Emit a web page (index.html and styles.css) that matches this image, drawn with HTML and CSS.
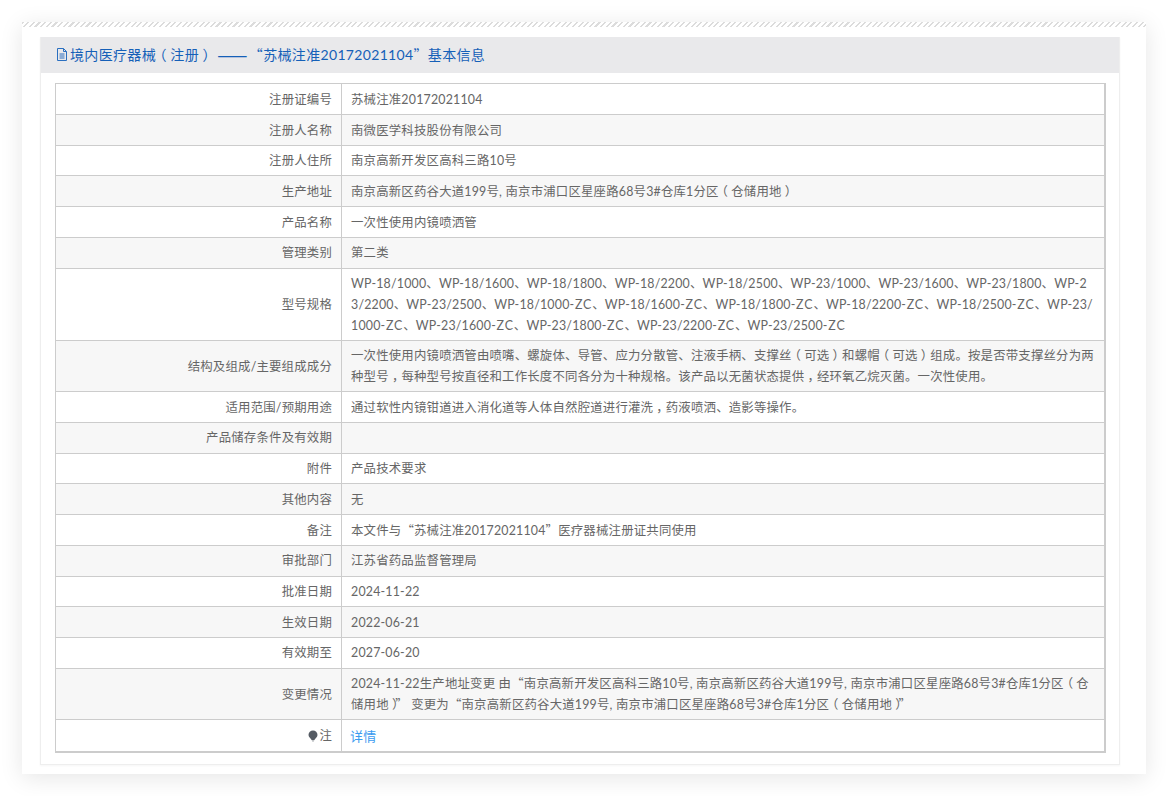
FILE: index.html
```html
<!DOCTYPE html>
<html lang="zh-CN">
<head>
    <meta charset="UTF-8">
    <title>境内医疗器械（注册）基本信息</title>
    <link rel="stylesheet" href="styles.css">
</head>
<body>
    <div class="sheet">
        <div class="stripes"></div>
        <div class="panel">
            <div class="panel-head">
                <svg class="doc-icon" viewBox="0 0 12 14" width="12" height="14">
                    <path d="M1.500 1.500h6l3 3v9h-9z M7.500 1.500v3h3 M3.500 7h5 M3.500 9h5 M3.500 11h5" fill="none" stroke="#2a6fc0" stroke-width="1"/>
                </svg>
                <span>境内医疗器械<span class="lp">（</span>注册<span class="rp">）</span></span><span class="dash">——</span><span><q>“</q>苏械注准20172021104<q>”</q>基本信息</span>
            </div>
            <div class="panel-body">
                <table class="info">
                    <tr><th>注册证编号</th><td>苏械注准20172021104</td></tr>
                    <tr><th>注册人名称</th><td>南微医学科技股份有限公司</td></tr>
                    <tr><th>注册人住所</th><td>南京高新开发区高科三路10号</td></tr>
                    <tr><th>生产地址</th><td>南京高新区药谷大道199号, 南京市浦口区星座路68号3#仓库1分区<span class="lp">（</span>仓储用地<span class="rp">）</span></td></tr>
                    <tr><th>产品名称</th><td>一次性使用内镜喷洒管</td></tr>
                    <tr><th>管理类别</th><td>第二类</td></tr>
                    <tr><th>型号规格</th><td>WP-18/1000、WP-18/1600、WP-18/1800、WP-18/2200、WP-18/2500、WP-23/1000、WP-23/1600、WP-23/1800、WP-23/2200、WP-23/2500、WP-18/1000<span class="zc">-ZC</span>、WP-18/1600<span class="zc">-ZC</span>、WP-18/1800<span class="zc">-ZC</span>、WP-18/2200<span class="zc">-ZC</span>、WP-18/2500<span class="zc">-ZC</span>、WP-23/1000<span class="zc">-ZC</span>、WP-23/1600<span class="zc">-ZC</span>、WP-23/1800<span class="zc">-ZC</span>、WP-23/2200<span class="zc">-ZC</span>、WP-23/2500<span class="zc">-ZC</span></td></tr>
                    <tr><th>结构及组成/主要组成成分</th><td>一次性使用内镜喷洒管由喷嘴、螺旋体、导管、应力分散管、注液手柄、支撑丝<span class="lp">（</span>可选<span class="rp">）</span>和螺帽<span class="lp">（</span>可选<span class="rp">）</span>组成。按是否带支撑丝分为两种型号<span class="rp">，</span>每种型号按直径和工作长度不同各分为十种规格。该产品以无菌状态提供<span class="rp">，</span>经环氧乙烷灭菌。一次性使用。</td></tr>
                    <tr><th>适用范围/预期用途</th><td>通过软性内镜钳道进入消化道等人体自然腔道进行灌洗<span class="rp">，</span>药液喷洒、造影等操作。</td></tr>
                    <tr><th>产品储存条件及有效期</th><td></td></tr>
                    <tr><th>附件</th><td>产品技术要求</td></tr>
                    <tr><th>其他内容</th><td>无</td></tr>
                    <tr><th>备注</th><td>本文件与<q>“</q>苏械注准20172021104<q>”</q>医疗器械注册证共同使用</td></tr>
                    <tr><th>审批部门</th><td>江苏省药品监督管理局</td></tr>
                    <tr><th>批准日期</th><td>2024-11-22</td></tr>
                    <tr><th>生效日期</th><td>2022-06-21</td></tr>
                    <tr><th>有效期至</th><td>2027-06-20</td></tr>
                    <tr><th>变更情况</th><td>2024-11-22生产地址变更 由<q>“</q>南京高新开发区高科三路10号, 南京高新区药谷大道199号, 南京市浦口区星座路68号3#仓库1分区<span class="lp">（</span>仓储用地<span class="rp">）</span><q>”</q> 变更为<q>“</q>南京高新区药谷大道199号, 南京市浦口区星座路68号3#仓库1分区<span class="lp">（</span>仓储用地<span class="rp">）</span><q>”</q></td></tr>
                    <tr class="last">
                        <th>
                            <svg class="tip-icon" viewBox="0 0 10 12" width="10" height="12">
                                <path d="M5 .5a4.500 4.500 0 0 1 4.500 4.500c0 2.200-2.400 3.600-3.300 5.200H3.800C3 8.600.5 7.200.5 5A4.500 4.500 0 0 1 5 .5z" fill="#555b63"/>
                                <rect x="4" y="10.500" width="2" height="1" fill="#a9adb2"/>
                            </svg>注
                        </th>
                        <td><a href="#">详情</a></td>
                    </tr>
                </table>
            </div>
        </div>
    </div>
</body>
</html>
```

FILE: styles.css
```css
* { box-sizing: border-box; }
html, body { margin: 0; height: 100%; background: #fff; overflow: hidden; }
body { padding: 22px; font-family: Lato, "Noto Sans CJK SC", "Liberation Sans", sans-serif; font-size: 12.4px; letter-spacing: .2px; color: #666; }

.sheet { width: 1124px; height: 752px; background: #fff; box-shadow: 0 4px 22px rgba(0, 0, 0, .1); }
.stripes { height: 5px; background: repeating-linear-gradient(135deg, #dcdcdc 0, #dcdcdc 1.5px, #fff 1.5px, #fff 4px); }

.panel { width: 1080px; height: 728px; margin: 10px 0 0 18px; background: #fff; border: 1px solid #eee; border-top: 0; box-shadow: 0 1px 2px rgba(0, 0, 0, .04); }
.panel-head { display: flex; align-items: center; height: 36px; padding: 0 0 2px 15px; background: #e9e9eb; color: #1560b8; font-size: 14px; letter-spacing: .33px; white-space: nowrap; }
.doc-icon { margin-right: 2px; flex: none; }
.dash { margin: 0 1px 0 4px; font-family: "Noto Sans CJK SC", sans-serif; font-size: 18px; line-height: 1; }
.panel-body { padding: 10.3px 14px 0 14px; }

/* quotes and centred full-width punctuation come from the CJK font */
q { quotes: none; font-family: "Noto Sans CJK SC", sans-serif; line-height: 0; }
.lp { margin-left: -.25em; margin-right: .25em; }
.rp { margin-left: .25em; margin-right: -.25em; }
.zc { letter-spacing: .87px; }

.info { width: 1051px; border-collapse: collapse; table-layout: fixed; border: 1px solid #ccc; border-right-width: 2px; border-bottom-width: 2px; line-height: 20.72px; }
.info th, .info td { padding: 5.5px 9px 3.5px; border: 1px solid #ccc; vertical-align: middle; word-break: break-all; }
.info th { width: 286px; text-align: right; font-weight: normal; }
.info tr:nth-child(even) { background: #f7f7f7; }
.info .last td, .info .last th { height: 32px; }
.info a { color: #3b9bf0; text-decoration: none; font-size: 13px; margin-left: -1px; }
.tip-icon { vertical-align: -2px; margin-right: 1px; }
```
